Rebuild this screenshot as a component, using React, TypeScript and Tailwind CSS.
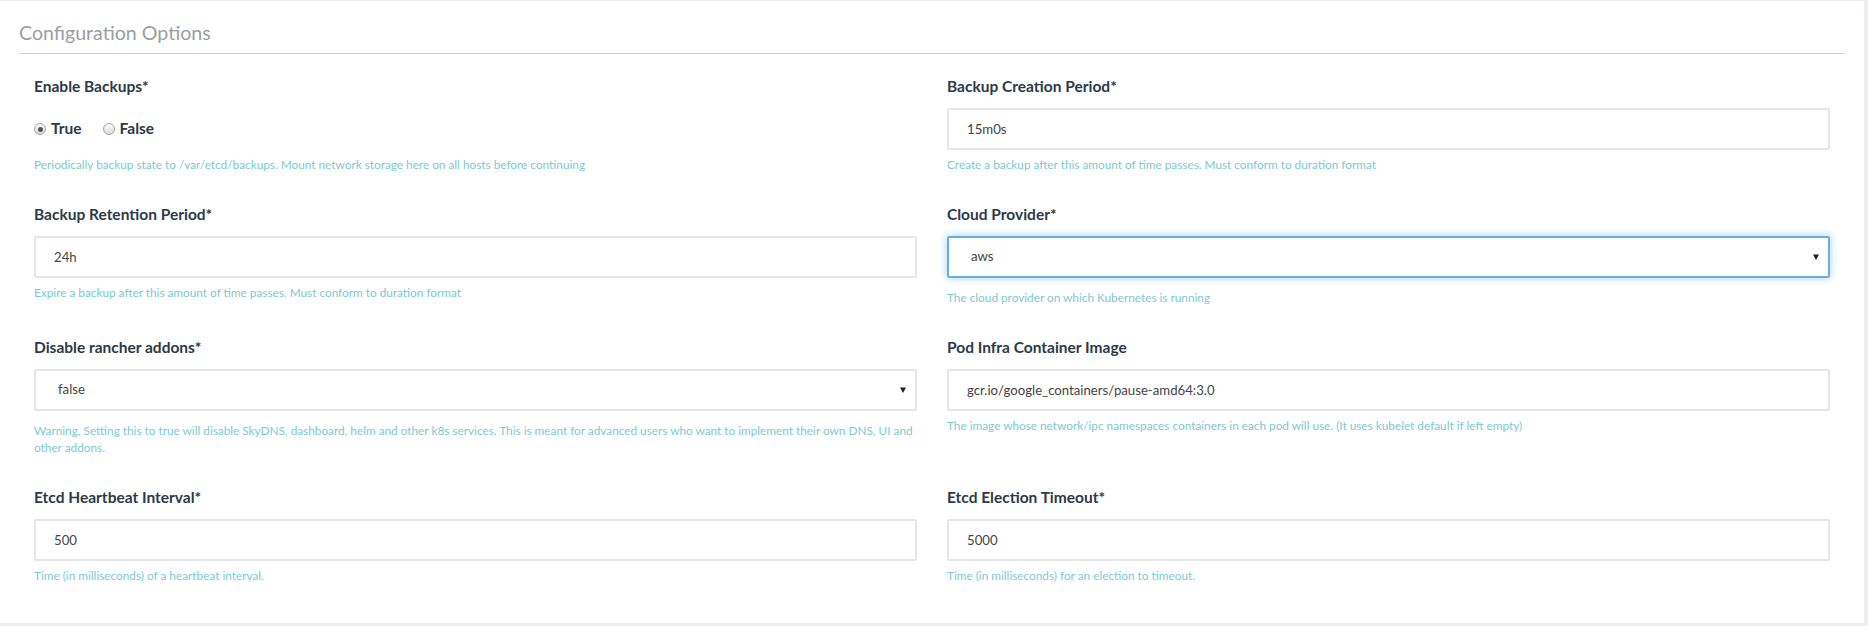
import React from 'react';

type FieldProps = {
    label: string;
    help: string;
    underSelect?: boolean;
    children: React.ReactNode;
};

const Field = ({ label, help, underSelect, children }: FieldProps) => {
    return (
        <div className="pb-[31px]">
            <label className="block text-[15.5px] leading-[20px] font-bold text-[#2c3a49] mb-[12px]">{label}</label>
            {children}
            <p className={underSelect ? 'mt-[11px] text-[11.8px] leading-[17px] text-[#7ccad0]' : 'mt-[6px] text-[11.8px] leading-[17px] text-[#7ccad0]'}>
                {help}
            </p>
        </div>
    );
};

const TextInput = ({ value }: { value: string }) => (
    <input
        readOnly
        value={value}
        className="block w-full h-[42px] border-2 border-[#e6e6e6] rounded-[2px] bg-white pl-[18px] text-[13.2px] text-[#444] outline-none"
    />
);

const Select = ({ value, focused }: { value: string; focused?: boolean }) => (
    <div
        className={
            focused
                ? 'relative flex items-center h-[42px] border-2 border-[#66afe9] rounded-[2px] bg-white pl-[22px] text-[13.2px] text-[#444] shadow-[0_0_8px_rgba(102,175,233,0.6)]'
                : 'relative flex items-center h-[42px] border-2 border-[#e6e6e6] rounded-[2px] bg-white pl-[22px] text-[13.2px] text-[#444]'
        }
    >
        {value}
        <svg className="absolute right-[9px] top-1/2 -translate-y-1/2" width="6" height="7" viewBox="0 0 6 7">
            <polygon points="0,1 6,1 3,6.5" fill="#222" />
        </svg>
    </div>
);

const Radio = ({ checked, label }: { checked?: boolean; label: string }) => (
    <span className="flex items-center gap-[5px]">
        <span className="flex items-center justify-center w-[12px] h-[12px] rounded-full border border-[#a3a3a3] bg-gradient-to-b from-[#fdfdfd] to-[#d9d9d9]">
            {checked && <span className="w-[5px] h-[5px] rounded-full bg-[#555]" />}
        </span>
        <span className="text-[15.5px] font-bold text-[#2c3a49]">{label}</span>
    </span>
);

export default function App() {
    return (
        <div className="bg-[#ebeeef] pt-px pr-[4px] pb-[3px] font-[Lato,sans-serif]">
            <div className="bg-white px-[19px] pt-[18px] pb-[8px]">
                <h4 className="text-[19.6px] leading-[28px] text-[#979fa4] pb-[6px] border-b border-[#cdd3d4]">
                    Configuration Options
                </h4>

                <div className="grid grid-cols-2 gap-x-[30px] px-[15px] pt-[22px]">
                    <Field
                        label="Enable Backups*"
                        help="Periodically backup state to /var/etcd/backups. Mount network storage here on all hosts before continuing"
                    >
                        <div className="flex items-center h-[42px] gap-[21px]">
                            <Radio checked label="True" />
                            <Radio label="False" />
                        </div>
                    </Field>
                    <Field
                        label="Backup Creation Period*"
                        help="Create a backup after this amount of time passes. Must conform to duration format"
                    >
                        <TextInput value="15m0s" />
                    </Field>

                    <Field
                        label="Backup Retention Period*"
                        help="Expire a backup after this amount of time passes. Must conform to duration format"
                    >
                        <TextInput value="24h" />
                    </Field>
                    <Field label="Cloud Provider*" help="The cloud provider on which Kubernetes is running" underSelect>
                        <Select value="aws" focused />
                    </Field>

                    <Field
                        label="Disable rancher addons*"
                        help="Warning, Setting this to true will disable SkyDNS, dashboard, helm and other k8s services. This is meant for advanced users who want to implement their own DNS, UI and other addons."
                        underSelect
                    >
                        <Select value="false" />
                    </Field>
                    <Field
                        label="Pod Infra Container Image"
                        help="The image whose network/ipc namespaces containers in each pod will use. (It uses kubelet default if left empty)"
                    >
                        <TextInput value="gcr.io/google_containers/pause-amd64:3.0" />
                    </Field>

                    <Field label="Etcd Heartbeat Interval*" help="Time (in milliseconds) of a heartbeat interval.">
                        <TextInput value="500" />
                    </Field>
                    <Field label="Etcd Election Timeout*" help="Time (in milliseconds) for an election to timeout.">
                        <TextInput value="5000" />
                    </Field>
                </div>
            </div>
        </div>
    );
}
